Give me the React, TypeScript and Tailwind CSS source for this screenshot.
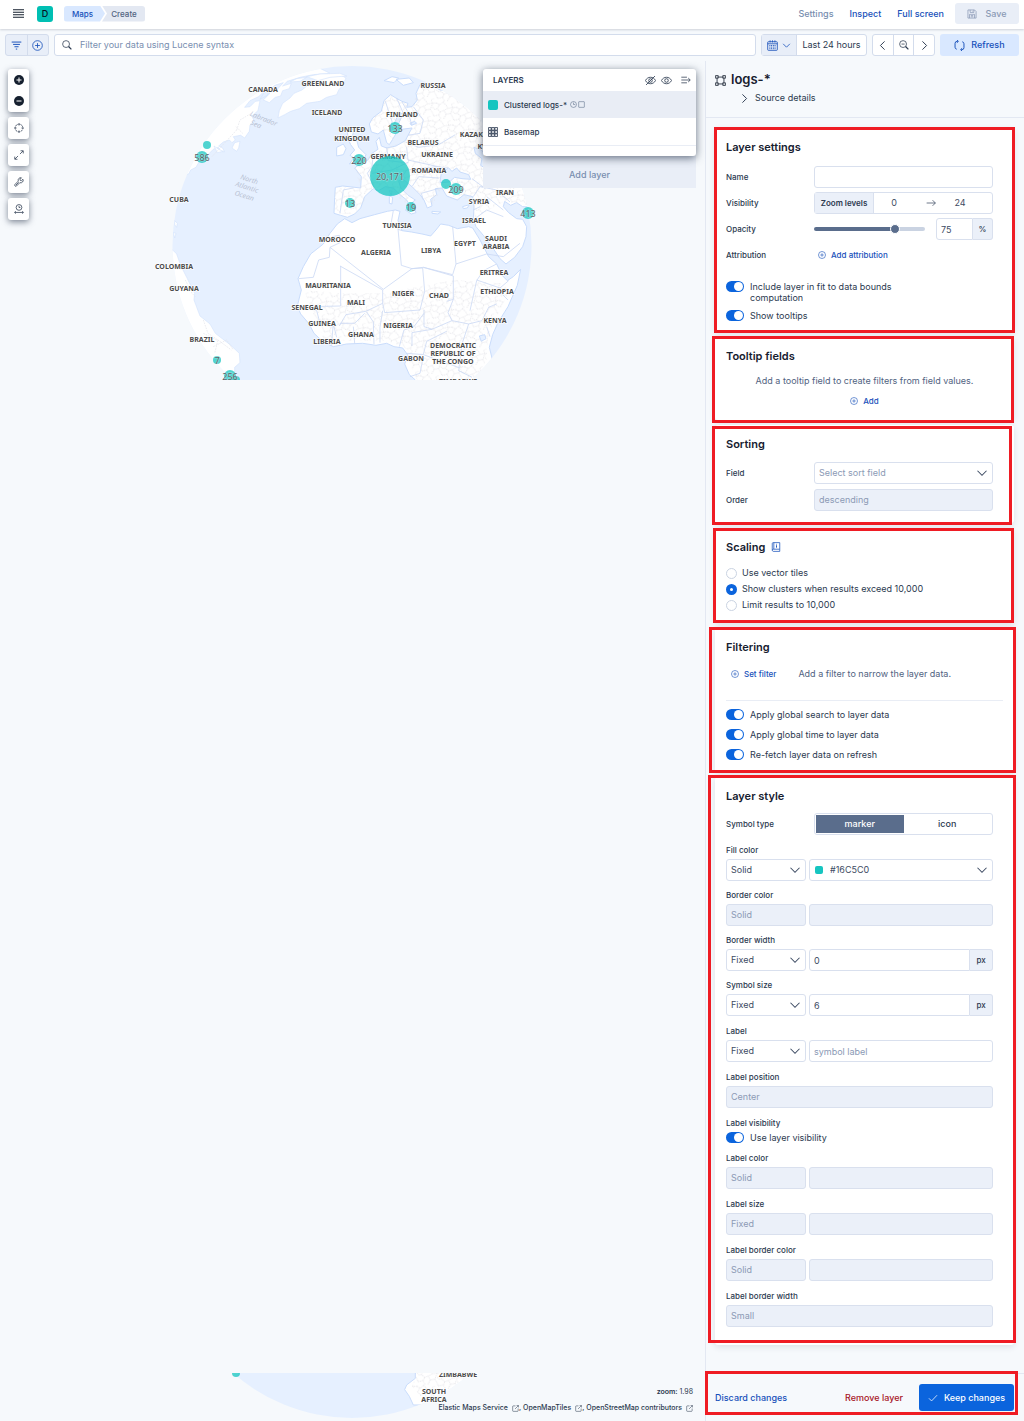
import { useState } from 'react'
import type { ReactNode } from 'react'

// 16x16 outline icons
const icons: Record<string, ReactNode> = {
    menu: <path d="M0 2.5h16M0 6.2h16M0 9.8h16M0 13.5h16" strokeWidth="1.6" />,
    filter: <path d="M1 3h14M3 6.4h10M5 9.8h6M7 13.2h2" strokeWidth="1.4" />,
    plusCircle: <><circle cx="8" cy="8" r="7" /><path d="M8 4.5v7M4.5 8h7" /></>,
    search: <><circle cx="6.5" cy="6.5" r="5.5" /><path d="M10.5 10.5l4.5 4.5" strokeWidth="2" /></>,
    calendar: <><rect x="1" y="2.5" width="14" height="12.5" rx="1" /><path d="M1 5.5h14M4.5 0.5v3M11.5 0.5v3M8 0.5v3" /><path d="M3.5 8h9M3.5 10.3h9M3.5 12.6h9" strokeDasharray="1.4 1.1" strokeWidth="1.4" /></>,
    chevronDown: <path d="M2 5l6 6 6-6" strokeWidth="1.4" />,
    chevronLeft: <path d="M11 2L5 8l6 6" strokeWidth="1.4" />,
    chevronRight: <path d="M5 2l6 6-6 6" strokeWidth="1.4" />,
    zoomOut: <><circle cx="6.5" cy="6.5" r="5.5" /><path d="M4 6.5h5" /><path d="M10.5 10.5l4.5 4.5" strokeWidth="2" /></>,
    refresh: <><path d="M5.5 2H4.500A3 3 0 0 0 1.500 5v5.500A3 3 0 0 0 4 13.400M10.500 14h1A3 3 0 0 0 14.500 11V5.500A3 3 0 0 0 12 2.600" strokeWidth="1.400" /><path d="M4.200 0L6.400 2 4.200 4M11.800 16L9.600 14l2.200-2" strokeWidth="1.400" /></>,
    save: <><path d="M1.500 1.500h10.500l2.500 2.500v10.500h-13z" /><path d="M5 1.500v4h6v-4M4 14.500v-6h8v6M9 3v1M6 10.500h4M6 12.500h4" /></>,
    crosshair: <><circle cx="8" cy="8" r="6.200" strokeDasharray="3.800 1.070" strokeDashoffset="1.900" /><path d="M8 0.500v3.500M8 12v3.500M0.500 8H4M12 8h3.500" /></>,
    expand: <path d="M9.500 6.500L14.500 1.500M10.500 1.200h4.300v4.300M6.500 9.500L1.500 14.500M1.200 10.500v4.300h4.300" />,
    wrench: <path d="M14.300 3.600l-2.300 2.200-1.900-.3-.4-1.900 2.200-2.300a4 4 0 0 0-5 5.200L1.600 11.800a1.700 1.700 0 0 0 2.500 2.500l5.200-5.200a4 4 0 0 0 5-5.500zM7.500 8.500l-4.500 4.500" />,
    timeslider: <><circle cx="8" cy="5.500" r="4.600" /><path d="M8 3v2.600h2.200M1 13.500h14M3 11.600l-2 1.900 2 1.900M13 11.600l2 1.900-2 1.900" /></>,
    eye: <><path d="M0.600 8C2.200 5 5 3.300 8 3.300S13.800 5 15.400 8C13.800 11 11 12.700 8 12.700S2.200 11 0.600 8z" /><circle cx="8" cy="8" r="2.600" /></>,
    eyeOff: <><path d="M0.600 8C2.200 5 5 3.300 8 3.300S13.800 5 15.400 8C13.800 11 11 12.700 8 12.700S2.200 11 0.600 8z" /><circle cx="8" cy="8" r="2.600" /><path d="M1.500 14.500l13-13" /></>,
    menuRight: <path d="M0.500 3.500h9M0.500 8h14M0.500 12.500h9M11.500 4.800L14.800 8l-3.300 3.200" />,
    clock: <><circle cx="8" cy="8" r="6.800" /><path d="M8 3.500V8h4" /></>,
    square: <rect x="1.500" y="1.500" width="13" height="13" rx="1" />,
    grid: <>{[1, 6, 11].map((y) => [1, 6, 11].map((x) => <rect key={`${x}-${y}`} x={x} y={y} width="4" height="4" strokeWidth="1.300" />))}</>,
    vector: <><path d="M4 3h8M4 13h8M3 4.500v7M13 4.500v7" /><rect x="1" y="1" width="3.500" height="3.500" /><rect x="11.500" y="1" width="3.500" height="3.500" /><rect x="1" y="11.500" width="3.500" height="3.500" /><rect x="11.500" y="11.500" width="3.500" height="3.500" /></>,
    arrowRight: <path d="M1 8h14M10.500 3.500L15 8l-4.500 4.500" />,
    docs: <><path d="M3.500 1h10.500v10.500H3.500A1.800 1.800 0 0 0 3.500 15H14v-3.500M2 13V2.500A1.500 1.500 0 0 1 3.500 1M4.500 1v10.500" /><path d="M8.800 5.200v3.800M8.800 3v1" strokeWidth="1.500" /></>,
    check: <path d="M1.500 8.500l4.200 4.200L14.500 3.500" />,
    popout: <><path d="M8 2H3a1.500 1.500 0 0 0-1.500 1.500V13A1.500 1.500 0 0 0 3 14.500h9.500A1.500 1.500 0 0 0 14 13V8" /><path d="M10.500 1.200h4.300v4.300M14.500 1.500L7 9" /></>,
}

const Icon = ({ name, className = "size-[11px]" }: { name: string, className?: string }) => (
    <svg viewBox="0 0 16 16" fill="none" stroke="currentColor" strokeWidth="1.200" aria-hidden="true" className={"shrink-0 " + className}>
        {icons[name]}
    </svg>
)

// [text, x, y]
const countries: [string, number, number][] = [
    ["CANADA", 263, 89], ["GREENLAND", 323, 83], ["ICELAND", 327, 112], ["RUSSIA", 433, 85],
    ["FINLAND", 402, 114], ["UNITED", 352, 129], ["KINGDOM", 352, 138], ["KAZAKHSTAN", 483, 134],
    ["KYRGYZSTAN", 500, 146], ["TAJIKISTAN", 504, 157], ["BELARUS", 423, 142], ["GERMANY", 388, 156],
    ["UKRAINE", 437, 154], ["ROMANIA", 429, 170], ["IRAN", 505, 192], ["SYRIA", 479, 201],
    ["ISRAEL", 474, 220], ["TUNISIA", 397, 225], ["MOROCCO", 337, 239], ["ALGERIA", 376, 252],
    ["LIBYA", 431, 250], ["EGYPT", 465, 243], ["SAUDI", 496, 238], ["ARABIA", 496, 246],
    ["ERITREA", 494, 272], ["ETHIOPIA", 497, 291], ["MAURITANIA", 328, 285], ["MALI", 356, 302],
    ["NIGER", 403, 293], ["CHAD", 439, 295], ["SENEGAL", 307, 307], ["GUINEA", 322, 323],
    ["NIGERIA", 398, 325], ["KENYA", 495, 320], ["GHANA", 361, 334], ["LIBERIA", 327, 341],
    ["GABON", 411, 358], ["DEMOCRATIC", 453, 345], ["REPUBLIC OF", 453, 353], ["THE CONGO", 453, 361],
    ["CUBA", 179, 199], ["COLOMBIA", 174, 266], ["GUYANA", 184, 288], ["BRAZIL", 202, 339],
    ["ZIMBABWE", 458, 381], ["SOUTH", 434, 398], ["AFRICA", 434, 406],
]

// [count, x, y, radius]
const clusters: [string, number, number, number][] = [
    ["586", 202, 157, 6], ["", 207, 145, 4], ["133", 395, 128, 6], ["220", 359, 160, 6],
    ["20,171", 390, 176, 20], ["13", 350, 203, 5], ["19", 411, 207, 5], ["", 446, 184, 5],
    ["209", 456, 189, 6], ["413", 528, 213, 6], ["7", 217, 360, 4], ["", 236, 380, 4], ["256", 230, 376, 6],
]

// the globe is drawn once and each strip of the map shows its own part of it
const Globe = ({ id, top, height }: { id: string, top: number, height: number }) => (
    <svg viewBox={`0 ${top} 705 ${height}`} role="img" aria-label="Map" className="block w-full">
        <defs>
            <clipPath id={id + "-clip"}><circle cx="352" cy="245.500" r="179.500" /></clipPath>
            <pattern id={id + "-mesh"} width="62" height="54" patternUnits="userSpaceOnUse" patternTransform="rotate(12)">
                <path d="M0 12l10 4 8-10 12 6 6 9 12-5 14-4M10 16l-5 13 12 6 10-6 9-8M27 29l8 10 13-5 3-18M17 35l-3 11 8 8M35 39l-4 15M48 34l8 9 6 9M5 29L0 32M18 6l5-6M62 32l-9-5M0 52l14-6M50 16l-5-10 7-6" fill="none" stroke="#dfe0e6" strokeWidth="2" strokeDasharray="4 2" />
            </pattern>
        </defs>
        <g clipPath={`url(#${id}-clip)`}>
            <rect x="150" y="60" width="400" height="380" fill="#e6f0ff" />
            {/* americas and greenland */}
            <g transform="translate(150 60) scale(.3333)" fill="#fff" stroke="#d5e4fc" strokeWidth="2" strokeLinejoin="round">
                <path d="M90 350L116 342 122 330 138 322 150 300 165 295 178 280 190 268 205 262 212 274 224 276 218 264 206 258 220 246 238 240 246 248 256 240 250 230 272 226 284 234 298 214 300 196 312 182 306 168 324 152 330 122 316 124 300 140 284 142 300 122 326 110 344 92 360 100 340 120 358 128 376 112 392 108 398 92 418 86 424 70 398 78 412 64 450 52 490 44 540 40 500 20 300 40 80 280z" />
                <path d="M246 264l8-16 16-4-4 20-6 10zM192 258l14 10 14 6-18 4z" />
                <path d="M330 118l12-20 16-8-6 16zM352 96l22-20 26-8-18 20z" fill="#e6f0ff" />
                <path d="M384 174l4-22 10-22 22-16 12-14 24-10 22-18 28-14 14-8 50-6 18 10-10 22-12 14-6 14-30 8-20 12-40 6-22 16-26 8-18 10z" />
                <path d="M470 50l40-8 60-2 20 8-50 4-36 10zM420 66l20-10 30-4-20 12z" />
                <path d="M56 560L70 572 80 582 92 616 110 652 124 680 134 700 132 720 150 768 180 792 196 820 240 854 268 880 270 908 254 922 254 944 268 966 140 966 50 700z" />
                <path d="M74 482l8 8-2 12-6-8zM70 518l8 2-4 14z" />
                <path d="M186 290L260 210M260 210l10-30 34-20M258 200l20 20M106 660l20 40 10 10M160 780l14 40 30 20-10 40M204 840l40 30M190 860l40-20 20 30M160 820l40 20" fill="none" stroke="#e3e4ea" strokeDasharray="5 3" />
            </g>
            {/* europe, asia and africa */}
            <g transform="translate(340 60) scale(.3333)" fill="#fff" stroke="#c9dcfb" strokeWidth="3" strokeLinejoin="round">
                <path d="M14 476L36 488 60 476 104 464 142 454 166 450 180 454 174 482 186 512 214 516 246 522 272 528 288 510 302 492 326 496 352 506 386 500 398 504 420 540 446 590 470 612 486 646 502 662 520 650 542 628 532 676 504 740 474 788 458 824 448 862 458 902 430 966 400 1010 316 1020 252 1056 220 1056 208 1030 194 1010 200 996 226 976 226 960 208 944 194 912 204 886 188 864 162 860 140 850 108 856 68 850 20 852 -20 860 -50 846 -78 820 -94 790 -118 762 -128 738 -116 690 -126 656 -110 620 -88 582 -50 552 -30 520 -8 492z" />
                <path d="M-108 690L0 700 130 700 340 660 480 670 510 690 470 770 445 824 440 900 380 1010 250 1040 216 1000 230 960 206 904 200 866 140 842 20 842-50 836z" fill={`url(#${id}-mesh)`} stroke="none" />
                <path id={id + "-eurasia"} d="M88 192L98 174 124 154 132 122 152 104 164 112 186 124 204 130 200 142 216 140 232 120 228 100 240 74 262 84 272 72 300 90 330 92 360 90 420 130 600 300 600 442 548 440 530 428 512 436 494 424 490 440 506 458 530 476 548 478 560 500 558 530 548 560 524 592 498 612 480 596 456 560 430 526 408 500 400 476 402 440 398 410 372 404 352 420 320 408 306 384 286 386 290 404 272 418 276 438 262 444 252 420 240 404 216 380 190 358 176 362 182 384 204 406 226 420 218 426 214 444 200 420 180 404 160 384 136 380 116 392 100 386 74 410 62 444 44 462 22 472 2 466 -18 460 -16 412 -14 382 8 378 62 384 64 350 44 324 60 312 84 300 96 280 114 268 108 244 118 232 124 258 140 264 168 258 196 242 204 226 216 204 184 208 176 190 190 160 176 162 160 196 172 214 158 238 148 254 140 248 130 210 114 222 94 216z" />
                <path d="M22 212L42 208 38 226 50 240 56 262 78 284 70 300 28 312 42 294 30 286 44 270 32 254 24 236zM-10 262l20-10 8 14-8 18-20 4z" />
                <path d="M196 450l28-4 4 12-14 4zM148 408l10 4-2 20-8-2zM148 392l8 2-2 12zM276 454l26 2-8 6-18-2zM368 440l20-6-6 10-12 2zM132 62l24-12 20 4-14 14zM168 58l40-4 12 14-30 8z" />
                <path d="M88 192L98 174 124 154 132 122 152 104 186 124 216 140 240 74 300 90 420 130 600 300 600 442 494 424 400 476 398 410 352 420 306 384 276 438 190 358 214 444 136 380 100 386 44 462-18 460-14 382 62 384 44 324 96 280 140 264 196 242 216 204 190 160 158 238 130 210z" fill={`url(#${id}-mesh)`} stroke="none" />
                <path d="M300 368L304 338 326 324 336 334 350 324 360 336 386 344 392 358 366 356 344 352 328 366zM402 262l22 8 20 20v40l-22-14 4-20-20-16zM418 828l16-4 4 12-14 8zM210 190l14-6 6 6-16 6z" fill="#e6f0ff" />
                <g fill="none" stroke="#ccdaf4" strokeWidth="2.500">
                    <path d="M-24 530L-2 526 0 548-30 562-32 592-64 600-80 652-124 656M-30 562L130 688 216 626 250 622 338 644 348 612 338 500M160 452l-6 34 20 20 10 110 32 10M174 508l12 4M348 612L440 582M2 618v120l-90 2M0 618l128 72v40l-50 24-60 10-20 34M216 626l32-2 6 70-14 56-106 8-6-28M250 622l90 26v70l-16 40 12 24-60 26-24-8 0-50M340 718l-20 6M128 752l-8 50v46M80 756l20 30 2 66M40 800l4 50M0 790l44 0 30-30M-100 740l30 12 8 30-26 8M-60 782l40 10 10 40M-20 790l-6 68M252 760l-30 40-30 10-14 50M276 808l-60 10 0 40M200 880l50 4 10-40 60-30M336 782l50 10 40-10 20-40 24-10M386 792l-20 60-10 80 40 20M440 800l10 30M410 660l70 24 26-22M470 612l-40 20-20 30-20 90M484 700l20 20M250 890l-10 50-30 10M250 884l110 40" />
                    <path d="M136 124l20 60-4 30M170 114l20 46M186 126l18 30 12 40M204 226l36-6 10-40-30-40M196 246l40 16 60-8 50-30M200 262l4 38 90 20 30 4M100 280l-4 40-14 20 20 40M140 262l6 40 50 6M96 340l60-10 50-24M180 360l20-30 90-10M216 380l20-30 60 4M250 420l-6-20 50-14M400 410l20-30 50 10 40 36M396 356l40 30M400 480l40-30 50 20M420 440l-20 10M40 384l-30 6-10 70M440 582l50 8 50-40M490 450l-50-40" />
                </g>
            </g>
        </g>
        <g fontFamily='"Noto Sans", sans-serif' textAnchor="middle" dominantBaseline="central">
            {top < 200 && (
                <g fill="#b9c2d3" fontStyle="italic" fontSize="7">
                    <g transform="rotate(22 262 120)"><text x="263" y="118">Labrador</text><text x="258" y="126">Sea</text></g>
                    <g transform="rotate(17 247 187)"><text x="247" y="179">North</text><text x="247" y="187">Atlantic</text><text x="247" y="196">Ocean</text></g>
                </g>
            )}
            <g fill="#4c4c4c" fontWeight="700" fontSize="7" stroke="#fff" strokeWidth="1.200" paintOrder="stroke">
                {countries.filter(([, , y]) => y > top && y < top + height + 2).map(([text, x, y]) => <text key={text} x={x} y={y}>{text}</text>)}
            </g>
            {clusters.filter(([, , y]) => y >= top && y <= top + height).map(([count, x, y, r]) => (
                <g key={x}>
                    <circle cx={x} cy={y} r={r} fill="#16c5c0" fillOpacity=".75" />
                    {count && <text x={x} y={y} fontSize="9" fill="#5b6166" stroke="#fff" strokeOpacity=".4" strokeWidth="1" paintOrder="stroke">{count}</text>}
                </g>
            ))}
        </g>
    </svg>
)

const field = "h-[22px] min-w-0 rounded-[3px] border border-[#d9e0ee] px-1 text-[9px] text-[#3d4b63] outline-none placeholder:text-[#8b9ab5] disabled:bg-[#ebf0f9] disabled:text-[#8b9ab5] disabled:opacity-100"

// outline drawn over a panel to point it out
const Highlight = ({ className }: { className: string }) => (
    <span aria-hidden="true" className={"pointer-events-none absolute border-3 border-[#ef1c24] " + className} />
)

const Card = ({ title, extra, highlight, className, children }: { title: string, extra?: ReactNode, highlight: string, className: string, children: ReactNode }) => (
    <section className={"relative rounded-[3px] bg-white pl-[11px] pr-[21px] pt-[11px] shadow-[0_2px_6px_rgba(43,57,79,0.12)] " + className}>
        <h2 className="flex h-4 items-center gap-[6px] text-[11px] font-semibold text-[#16202f]">{title}{extra}</h2>
        {children}
        <Highlight className={highlight} />
    </section>
)

const Select = ({ id, label, options, className = "", textClass = "", ...rest }: { id?: string, label?: string, options: string[], className?: string, textClass?: string, disabled?: boolean }) => (
    <span className={"relative flex " + className}>
        <select id={id} aria-label={label} className={field + " w-full appearance-none " + (rest.disabled ? "" : "bg-white ") + textClass} {...rest}>
            {options.map((o) => <option key={o}>{o}</option>)}
        </select>
        {!rest.disabled && <Icon name="chevronDown" className="pointer-events-none absolute right-[5px] top-[5px] size-[12px] text-[#3d4b63]" />}
    </span>
)

const Switch = ({ children }: { children: ReactNode }) => {
    const [on, setOn] = useState(true)
    return (
        <label className="flex gap-[6px] text-[9px] leading-[11px] text-[#2b394f]">
            <input
                type="checkbox"
                role="switch"
                checked={on}
                onChange={() => setOn(!on)}
                className="flex h-[11px] w-[18px] shrink-0 appearance-none items-center rounded-full bg-[#98a8c3] px-px before:size-[9px] before:rounded-full before:bg-white checked:justify-end checked:bg-[#0b64dd]"
            />
            <span>{children}</span>
        </label>
    )
}

const Row = ({ id, label, children }: { id?: string, label: string, children: ReactNode }) => (
    <div className="flex h-[22px] items-center">
        <label htmlFor={id} className="w-[88px] shrink-0 text-[8px] font-medium text-[#2b394f]">{label}</label>
        <div className="flex min-w-0 flex-1 items-center">{children}</div>
    </div>
)

const StyleField = ({ id, label, children }: { id: string, label: string, children: ReactNode }) => (
    <div className="flex flex-col gap-[3px]">
        <label htmlFor={id} className="text-[8px] font-medium leading-[11px] text-[#2b394f]">{label}</label>
        <div className="flex gap-[3px]">{children}</div>
    </div>
)

const LinkButton = ({ children }: { children: ReactNode }) => (
    <button className="flex h-4 items-center gap-[5px] px-1 text-[8px] font-medium text-[#1750ba]">
        <Icon name="plusCircle" className="size-[8px]" />{children}
    </button>
)

const PxInput = ({ id, value }: { id: string, value: string }) => (
    <span className="flex min-w-0 flex-1">
        <input id={id} defaultValue={value} className={field + " w-full rounded-r-none"} />
        <span className="flex w-[23px] shrink-0 items-center justify-center rounded-r-[3px] border border-l-0 border-[#d9e0ee] bg-[#ebf0f9] text-[8px] font-medium text-[#2b394f]">px</span>
    </span>
)

const Tool = ({ icon, label }: { icon: string, label: string }) => (
    <button aria-label={label} className="flex h-[22px] w-[21px] items-center justify-center rounded-[3px] bg-white text-[#2b394f] shadow-[0_2px_6px_rgba(43,57,79,0.6)]">
        <Icon name={icon} className="size-[10px]" />
    </button>
)

const Header = () => (
    <header className="flex h-[29px] items-center bg-white pl-[13px] pr-[5px] pb-[2px] text-[9px] font-medium shadow-[0_1px_2px_rgba(43,57,79,0.2)]">
        <button aria-label="Menu" className="text-[#16202f]"><Icon name="menu" /></button>
        <span className="ml-[13px] flex size-4 items-center justify-center rounded-[3px] bg-[#00bfb3] text-[#07101f]">D</span>
        <nav aria-label="Breadcrumb" className="ml-[11px] flex text-[8px]">
            <a href="#maps" className="flex h-4 w-[41px] items-center rounded-l-[3px] bg-[#d9e8ff] pl-2 text-[#1750ba] [clip-path:polygon(0_0,36px_0,100%_50%,36px_100%,0_100%)]">Maps</a>
            <a href="#create" className="-ml-[3px] flex h-4 w-[43px] items-center justify-center rounded-r-[3px] bg-[#e3e8f2] pl-px text-[#516381] [clip-path:polygon(0_0,100%_0,100%_100%,0_100%,5px_50%)]">Create</a>
        </nav>
        <div className="ml-auto flex items-center gap-4 text-[#1750ba]">
            <button className="text-[#798eaf]">Settings</button>
            <button>Inspect</button>
            <button>Full screen</button>
            <button disabled className="-ml-[5px] flex h-[21px] w-16 items-center justify-center gap-2 rounded-[3px] bg-[#e9eef7] text-[#8b9ab5]">
                <Icon name="save" className="size-[10px]" />Save
            </button>
        </div>
    </header>
)

const QueryBar = () => {
    const box = "flex h-[22px] shrink-0 items-center rounded-[3px] border border-[#d3dcec]"
    return (
        <div className="flex gap-[5px] p-[5px]">
            <div className={box + " w-[44px] bg-[#e8eef8] text-[#1750ba]"}>
                <button aria-label="Filters" className="flex h-full flex-1 items-center justify-center border-r border-[#d3dcec]"><Icon name="filter" /></button>
                <button aria-label="Add filter" className="flex h-full flex-1 items-center justify-center"><Icon name="plusCircle" /></button>
            </div>
            <label className="flex h-[22px] flex-1 items-center gap-2 rounded-[3px] border border-[#d3dcec] bg-white pl-[7px] text-[#2b394f]">
                <Icon name="search" className="size-[10px]" />
                <input aria-label="Search" placeholder="Filter your data using Lucene syntax" className="w-full text-[9px] outline-none placeholder:text-[#798eaf]" />
            </label>
            <div className={box + " w-[106px] bg-white text-[9px] text-[#2b394f]"}>
                <button aria-label="Date quick select" className="flex h-full w-[35px] items-center justify-center gap-1 border-r border-[#d3dcec] bg-[#e8eef8] text-[#1750ba]">
                    <Icon name="calendar" /><Icon name="chevronDown" className="size-[9px]" />
                </button>
                <button className="flex-1">Last 24 hours</button>
            </div>
            <div className={box + " w-[63px] divide-x divide-[#d3dcec] bg-white text-[#2b394f]"}>
                <button aria-label="Previous" className="flex h-full flex-1 items-center justify-center"><Icon name="chevronLeft" /></button>
                <button aria-label="Zoom out" className="flex h-full flex-1 items-center justify-center"><Icon name="zoomOut" className="size-[10px]" /></button>
                <button aria-label="Next" className="flex h-full flex-1 items-center justify-center"><Icon name="chevronRight" /></button>
            </div>
            <button className="flex h-[22px] w-[79px] items-center justify-center gap-[6px] rounded-[3px] bg-[#d9e8ff] text-[9px] font-medium text-[#1750ba]">
                <Icon name="refresh" />Refresh
            </button>
        </div>
    )
}

const LayersPanel = () => (
    <div className="absolute right-[9px] top-[8px] w-[213px] text-[#2b394f]">
        <div className="relative rounded-[3px] bg-white pb-[10px] shadow-[0_2px_8px_rgba(43,57,79,0.7)]">
            <div className="flex h-[22px] items-center gap-[5px] pl-[10px] pr-[5px]">
                <h2 className="flex-1 text-[8px] font-semibold">LAYERS</h2>
                <button aria-label="Hide all layers"><Icon name="eyeOff" /></button>
                <button aria-label="Show all layers"><Icon name="eye" /></button>
                <button aria-label="Collapse" className="ml-[4px]"><Icon name="menuRight" className="size-[10px]" /></button>
            </div>
            <div className="flex h-[27px] items-center bg-[#e9edf5] pl-[5px] text-[8px] font-medium">
                <span className="mr-[6px] size-[10px] rounded-[2px] bg-[#16c5c0]" />
                <button>Clustered logs-*</button>
                <Icon name="clock" className="ml-[3px] size-[7px] text-[#516381]" />
                <Icon name="square" className="ml-px size-[7px] text-[#516381]" />
            </div>
            <div className="flex h-[28px] items-center gap-[6px] border-b border-[#e9edf5] pl-[5px] text-[8px] font-medium">
                <Icon name="grid" className="size-[10px]" />
                <button>Basemap</button>
            </div>
        </div>
        <button disabled className="h-8 w-full bg-[#e9eef7] pt-[6px] text-[9px] font-medium text-[#798eaf]">Add layer</button>
    </div>
)

const credits = ["Elastic Maps Service", "OpenMapTiles", "OpenStreetMap contributors"]

const MapView = () => (
    <main className="flex min-w-0 flex-1 flex-col justify-between">
        <div className="relative">
            <Globe id="north" top={61} height={319} />
            <div className="absolute left-[8px] top-[8px] flex flex-col gap-[5px]">
                <div className="flex h-[43px] w-[21px] flex-col items-center justify-around rounded-[3px] bg-white text-[#16202f] shadow-[0_2px_6px_rgba(43,57,79,0.6)]">
                    <button aria-label="Zoom in"><svg viewBox="0 0 10 10" className="size-[10px]"><circle cx="5" cy="5" r="5" fill="currentColor" /><path d="M5 2.500v5M2.500 5h5" stroke="#fff" /></svg></button>
                    <button aria-label="Zoom out of map"><svg viewBox="0 0 10 10" className="size-[10px]"><circle cx="5" cy="5" r="5" fill="currentColor" /><path d="M2.500 5h5" stroke="#fff" /></svg></button>
                </div>
                <Tool icon="crosshair" label="Go to location" />
                <Tool icon="expand" label="Fit to data bounds" />
                <Tool icon="wrench" label="Tools" />
                <Tool icon="timeslider" label="Time slider" />
            </div>
            <LayersPanel />
        </div>
        <div className="relative">
            <Globe id="south" top={380} height={48} />
            <div className="absolute right-[12px] bottom-[7px] flex flex-col items-end gap-[4px] text-[7px] leading-[12px] text-[#2b394f]">
                <p><span className="font-semibold">zoom:</span> 1.98</p>
                <p className="flex font-medium">
                    {credits.map((c, i) => (
                        <span key={c} className="flex items-center">
                            <a href="#credits" className="flex items-center gap-1">{c}<Icon name="popout" className="size-[7px]" /></a>
                            {i < credits.length - 1 && <span className="mr-[2px]">,</span>}
                        </span>
                    ))}
                </p>
            </div>
        </div>
    </main>
)

const LayerEditor = () => (
    <aside className="flex w-[319px] shrink-0 flex-col border-l border-[#e3e8f2]">
        <div className="flex h-[57px] flex-col border-b border-[#e3e8f2] pl-[9px] pt-[9px]">
            <h1 className="flex h-5 items-center gap-[5px] text-[13px] font-semibold text-[#16202f]">
                <Icon name="vector" className="size-[11px]" />logs-*
            </h1>
            <button className="ml-[24px] flex h-4 items-center gap-[5px] text-[9px] text-[#2b394f]">
                <Icon name="chevronRight" />Source details
            </button>
        </div>

        <div className="flex flex-col gap-[5px] pb-[27px] pl-[9px] pr-[10px] pt-[10px]">
            <Card title="Layer settings" highlight="-inset-px" className="pb-[11px]">
                <div className="mt-[11px] flex flex-col gap-1">
                    <Row id="name" label="Name"><input id="name" className={field + " w-full"} /></Row>
                    <Row id="min-zoom" label="Visibility">
                        <span className="flex h-[22px] w-full items-center rounded-[3px] border border-[#d9e0ee] pr-3 text-[9px] text-[#3d4b63]">
                            <span className="flex h-full w-[59px] shrink-0 items-center justify-center border-r border-[#d9e0ee] bg-[#ebf0f9] text-[8px] font-semibold text-[#2b394f]">Zoom levels</span>
                            <input id="min-zoom" defaultValue="0" className="min-w-0 flex-1 pr-3 text-center outline-none" />
                            <Icon name="arrowRight" className="size-[10px]" />
                            <input aria-label="Maximum zoom" defaultValue="24" className="min-w-0 flex-1 pl-1 text-center outline-none" />
                        </span>
                    </Row>
                    <Row id="opacity" label="Opacity">
                        <input id="opacity" type="range" defaultValue="75" className="h-[4px] w-0 min-w-0 flex-1 appearance-none rounded-full bg-linear-to-r from-[#5a6d8c] from-73% to-[#cad3e2] to-73% [&::-webkit-slider-thumb]:size-[10px] [&::-webkit-slider-thumb]:appearance-none [&::-webkit-slider-thumb]:rounded-full [&::-webkit-slider-thumb]:border [&::-webkit-slider-thumb]:border-white [&::-webkit-slider-thumb]:bg-[#5a6d8c]" />
                        <input aria-label="Opacity value" defaultValue="75" className={field + " ml-[11px] w-[37px] rounded-r-none"} />
                        <span className="flex h-[22px] w-[20px] items-center justify-center rounded-r-[3px] border border-l-0 border-[#d9e0ee] bg-[#ebf0f9] text-[8px] font-medium text-[#2b394f]">%</span>
                    </Row>
                    <Row label="Attribution"><LinkButton>Add attribution</LinkButton></Row>
                </div>
                <div className="mt-[15px] flex max-w-[184px] flex-col gap-[7px]">
                    <Switch>Include layer in fit to data bounds computation</Switch>
                    <Switch>Show tooltips</Switch>
                </div>
            </Card>

            <Card title="Tooltip fields" highlight="-left-[3px] -top-px -bottom-[3px] right-0" className="pb-[11px]">
                <div className="-mr-[10px] mt-[9px] flex flex-col items-center gap-1">
                    <p className="text-[9px] leading-4 text-[#516381]">Add a tooltip field to create filters from field values.</p>
                    <LinkButton>Add</LinkButton>
                </div>
            </Card>

            <Card title="Sorting" highlight="-left-[3px] top-px -bottom-[2px] right-[2px]" className="pb-3">
                <div className="mt-[10px] flex flex-col gap-[5px]">
                    <Row id="sort-field" label="Field"><Select id="sort-field" options={["Select sort field"]} className="w-full" textClass="text-[#8b9ab5]" /></Row>
                    <Row id="sort-order" label="Order"><Select id="sort-order" options={["descending"]} className="w-full" disabled /></Row>
                </div>
            </Card>

            <Card
                title="Scaling"
                extra={<button aria-label="Scaling documentation" className="text-[#1750ba]"><Icon name="docs" className="size-[10px]" /></button>}
                highlight="-left-[2px] top-0 right-0 bottom-0"
                className="pb-[10px]"
            >
                <div className="mt-[10px] text-[9px] text-[#2b394f]">
                    {["Use vector tiles", "Show clusters when results exceed 10,000", "Limit results to 10,000"].map((option, i) =>
                        <label key={option} className="flex h-4 items-center gap-[5px]">
                            <input type="radio" name="scaling" defaultChecked={i == 1} className="size-[11px] appearance-none rounded-full border border-[#cad3e2] bg-white checked:border-4 checked:border-[#0b64dd]" />
                            {option}
                        </label>
                    )}
                </div>
            </Card>

            <Card title="Filtering" highlight="-left-[6px] -right-[2px] -top-px -bottom-px" className="pb-3">
                <div className="mt-[11px] flex h-4 items-center gap-[18px] pl-px">
                    <LinkButton>Set filter</LinkButton>
                    <p className="text-[9px] text-[#516381]">Add a filter to narrow the layer data.</p>
                </div>
                <hr className="-mr-[10px] mt-[18px] border-[#e9edf5]" />
                <div className="mt-[8px] flex flex-col gap-[9px]">
                    <Switch>Apply global search to layer data</Switch>
                    <Switch>Apply global time to layer data</Switch>
                    <Switch>Re-fetch layer data on refresh</Switch>
                </div>
            </Card>

            <Card title="Layer style" highlight="-left-[7px] -right-[2px] -top-[2px] bottom-[2px]" className="pb-[18px]">
                <div className="mt-[9px]">
                    <Row label="Symbol type">
                        <div className="flex h-[22px] w-full rounded-[3px] border border-[#d9e0ee] p-px text-[9px] font-medium text-[#2b394f]">
                            <button className="flex-1 bg-[#5a6d8c] text-white">marker</button>
                            <button className="flex-1">icon</button>
                        </div>
                    </Row>
                </div>
                <div className="mt-[10px] flex flex-col gap-[9px]">
                    <StyleField id="fill" label="Fill color">
                        <Select id="fill" options={["Solid"]} className="w-20" />
                        <span className="relative flex flex-1">
                            <Select label="Fill color value" options={["#16C5C0"]} className="flex-1" textClass="pl-5" />
                            <span className="absolute left-[6px] top-[7px] size-[8px] rounded-[2px] bg-[#16c5c0]" />
                        </span>
                    </StyleField>
                    <StyleField id="border-color" label="Border color">
                        <Select id="border-color" options={["Solid"]} className="w-20" disabled />
                        <input aria-label="Border color value" disabled className={field + " flex-1"} />
                    </StyleField>
                    <StyleField id="border-width" label="Border width">
                        <Select label="Border width type" options={["Fixed"]} className="w-20" />
                        <PxInput id="border-width" value="0" />
                    </StyleField>
                    <StyleField id="symbol-size" label="Symbol size">
                        <Select label="Symbol size type" options={["Fixed"]} className="w-20" />
                        <PxInput id="symbol-size" value="6" />
                    </StyleField>
                </div>
                <div className="mt-[10px] flex flex-col gap-[10px]">
                    <StyleField id="label" label="Label">
                        <Select label="Label type" options={["Fixed"]} className="w-20" />
                        <input id="label" placeholder="symbol label" className={field + " flex-1"} />
                    </StyleField>
                    <StyleField id="label-position" label="Label position">
                        <Select id="label-position" options={["Center"]} className="w-full" disabled />
                    </StyleField>
                    <div className="flex flex-col gap-[3px]">
                        <span className="text-[8px] font-medium leading-[11px] text-[#2b394f]">Label visibility</span>
                        <Switch>Use layer visibility</Switch>
                    </div>
                    <StyleField id="label-color" label="Label color">
                        <Select id="label-color" options={["Solid"]} className="w-20" disabled />
                        <input aria-label="Label color value" disabled className={field + " flex-1"} />
                    </StyleField>
                    <StyleField id="label-size" label="Label size">
                        <Select id="label-size" options={["Fixed"]} className="w-20" disabled />
                        <input aria-label="Label size value" disabled className={field + " flex-1"} />
                    </StyleField>
                    <StyleField id="label-border-color" label="Label border color">
                        <Select id="label-border-color" options={["Solid"]} className="w-20" disabled />
                        <input aria-label="Label border color value" disabled className={field + " flex-1"} />
                    </StyleField>
                    <StyleField id="label-border-width" label="Label border width">
                        <Select id="label-border-width" options={["Small"]} className="w-full" disabled />
                    </StyleField>
                </div>
            </Card>
        </div>

        <footer className="relative mt-auto flex h-[48px] items-center border-t border-[#e3e8f2] pl-[9px] pr-[10px] text-[9px] font-medium">
            <button className="text-[#1750ba]">Discard changes</button>
            <button className="ml-auto text-[#a71627]">Remove layer</button>
            <button className="ml-4 flex h-[27px] w-[95px] items-center justify-center gap-[6px] rounded-[3px] bg-[#0b64dd] text-white">
                <Icon name="check" className="size-[10px]" />Keep changes
            </button>
            <Highlight className="-left-px right-[6px] -top-[3px] bottom-[6px]" />
        </footer>
    </aside>
)

export default function App() {
    return (
        <div className="flex min-h-screen flex-col bg-[#f6f9fc] font-[Inter,sans-serif]">
            <Header />
            <QueryBar />
            <div className="flex flex-1">
                <MapView />
                <LayerEditor />
            </div>
        </div>
    )
}
